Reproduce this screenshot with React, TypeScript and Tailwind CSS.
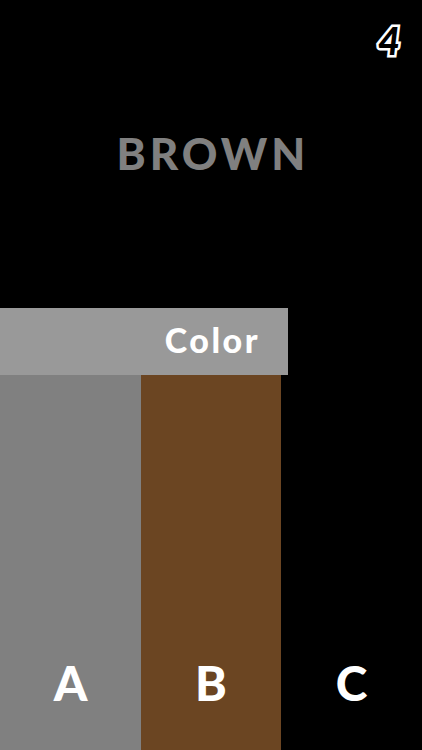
import React from "react";

export default function App() {
  const font = { fontFamily: "Lato, 'Open Sans', sans-serif" };
  return (
    <div className="w-[422px] h-[750px] bg-black flex flex-col overflow-hidden" style={font}>
      <div className="h-[308px] flex flex-col">
        <div className="flex justify-end pr-[22px] pt-[21px] h-[60px]">
          <span className="text-[38px] leading-none font-black italic text-black [-webkit-text-stroke:5px_white] [paint-order:stroke_fill]">
            4
          </span>
        </div>
        <div className="flex justify-center pt-[71px]">
          <span className="text-[44px] leading-none font-black text-[#808080] tracking-[4px] pl-[4px]">BROWN</span>
        </div>
      </div>
      <div className="w-[288px] h-[67px] bg-[#999999] flex items-center justify-end pr-[28px] pb-[4px]">
        <span className="text-[34px] font-black text-white leading-none tracking-[2.5px]">Color</span>
      </div>
      <div className="flex h-[375px]">
        <div className="w-[141px] bg-[#808080] flex items-end justify-center pb-[43px]">
          <span className="text-[48px] font-black text-white leading-none">A</span>
        </div>
        <div className="w-[140px] bg-[#6b4522] flex items-end justify-center pb-[43px]">
          <span className="text-[48px] font-black text-white leading-none">B</span>
        </div>
        <div className="w-[141px] bg-black flex items-end justify-center pb-[43px]">
          <span className="text-[48px] font-black text-white leading-none">C</span>
        </div>
      </div>
    </div>
  );
}
